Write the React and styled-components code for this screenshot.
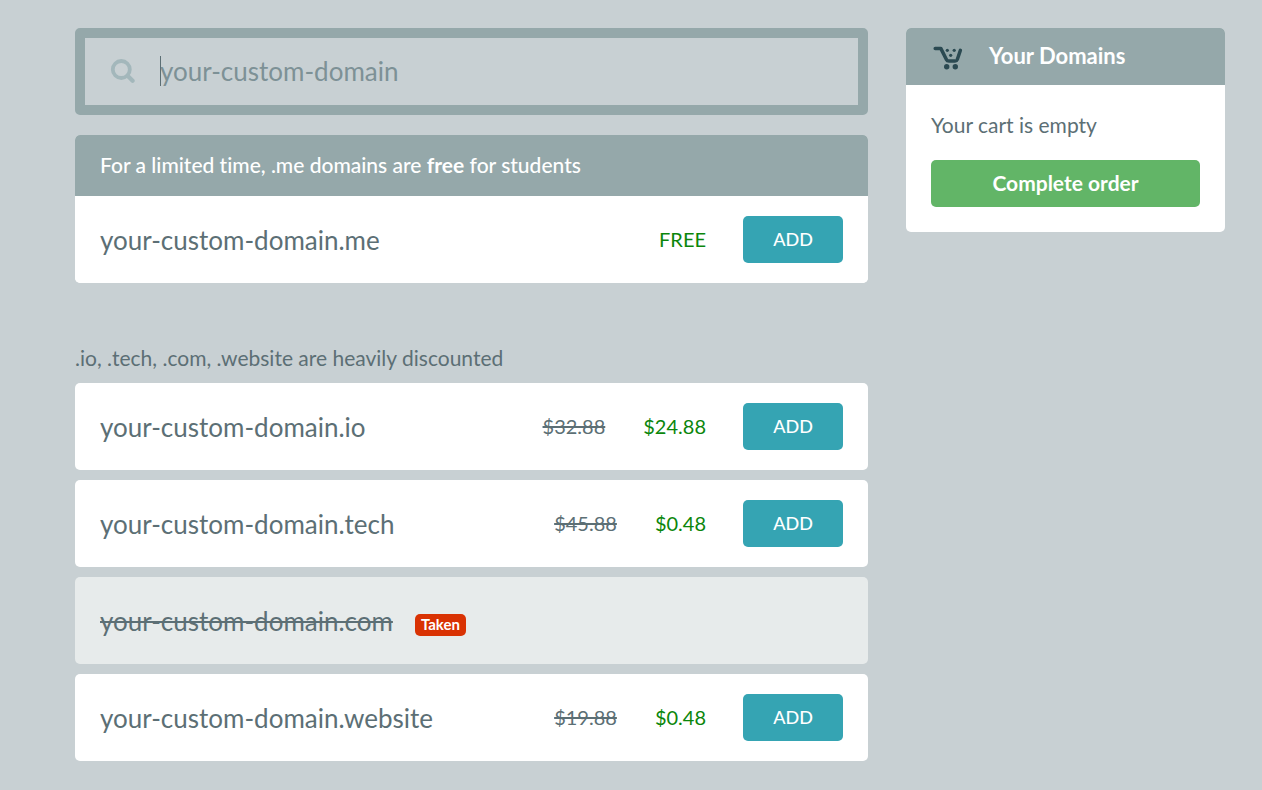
import React from "react";
import styled, { createGlobalStyle } from "styled-components";

const GlobalStyle = createGlobalStyle`
  *, *::before, *::after { box-sizing: border-box; }
  body {
    margin: 0;
    background: #c8d0d3;
    color: #5c6f75;
    font-family: Lato, "Liberation Sans", sans-serif;
    font-size: 21px;
    font-variant-ligatures: none;
    line-height: 30px;
  }
  button, input { font: inherit; }
`;

const Page = styled.div`
  display: grid;
  grid-template-columns: minmax(0, 1fr) 319px;
  align-items: start;
  gap: 38px;
  padding: 28px 37px 28px 75px;
`;

const Main = styled.main`
  display: flex;
  flex-direction: column;
`;

const SearchBox = styled.label`
  position: relative;
  display: flex;
  align-items: center;
  gap: 25px;
  padding: 18px 25px;
  border: 10px solid #95a8aa;
  border-radius: 5px;
`;

const SearchIcon = styled.svg`
  flex: none;
  width: 25px;
  height: 25px;
`;

const SearchInput = styled.input`
  flex: 1;
  min-width: 0;
  height: 31px;
  padding: 0 0 2px;
  border: 0;
  outline: 0;
  background: none;
  color: #5c6f75;
  caret-color: transparent;
  font-size: 26px;
  &::placeholder { color: #7d9196; opacity: 1; }
`;

const Caret = styled.span`
  position: absolute;
  left: 75px;
  top: 18px;
  width: 1px;
  height: 30px;
  background: #5c6f75;
`;

const Card = styled.section`
  overflow: hidden;
  margin-top: ${(p) => (p.$spaced ? "20px" : "0")};
  border-radius: 5px;
  background: #fff;
`;

const PromoTitle = styled.h2`
  margin: 0;
  padding: 15px 25px 16px;
  background: #95a8aa;
  color: #fff;
  font-size: 21px;
  font-weight: 500;
`;

const SectionNote = styled.p`
  margin: 60px 0 10px;
`;

const DomainList = styled.ul`
  display: flex;
  flex-direction: column;
  gap: 10px;
  margin: 0;
  padding: 0;
  list-style: none;
`;

const Row = styled.div`
  display: flex;
  align-items: center;
  min-height: 87px;
  padding: 20px 25px;
  border-radius: 5px;
  background: ${(p) => (p.$taken ? "#e7ebeb" : "#fff")};
`;

const DomainName = styled.span`
  font-size: 26px;
  text-decoration: ${(p) => (p.$taken ? "line-through 2px" : "none")};
`;

const TakenBadge = styled.span`
  margin: 8px 0 0 22px;
  padding: 0 6px 2px;
  border-radius: 5px;
  background: #d93203;
  color: #fff;
  font-size: 15px;
  font-weight: 700;
  line-height: 20px;
`;

const Prices = styled.div`
  display: flex;
  gap: 38px;
  margin: 0 37px 0 auto;
  padding-bottom: 2px;
  font-size: 20px;
`;

const OldPrice = styled.s`
  text-decoration-thickness: 2px;
`;

const Price = styled.span`
  color: #0b860b;
`;

const Button = styled.button`
  width: ${(p) => (p.$wide ? "100%" : "100px")};
  height: 47px;
  padding: 0 0 1px;
  border: 0;
  border-radius: 5px;
  background: ${(p) => (p.$wide ? "#62b567" : "#35a4b3")};
  color: #fff;
  font-size: ${(p) => (p.$wide ? "21px" : "18px")};
  font-weight: ${(p) => (p.$wide ? 700 : 500)};
  cursor: pointer;
`;

const CartHeader = styled.header`
  display: flex;
  align-items: center;
  gap: 26px;
  height: 57px;
  padding: 0 27px;
  background: #95a8aa;
`;

const CartTitle = styled.h2`
  margin: 0;
  padding-bottom: 2px;
  color: #fff;
  font-size: 22px;
  font-weight: 700;
`;

const CartBody = styled.div`
  padding: 25px;
`;

const CartText = styled.p`
  margin: 0 0 20px;
`;

const CartGlyph = () => (
  <svg width="30" height="26" viewBox="0 0 30 26" aria-hidden="true">
    <path
      d="M2.2 4.4H7.8L13.4 15.5Q14.1 17.1 16 17.1H22Q23.7 17.1 24.3 15.5L27.4 6.3"
      fill="none"
      stroke="#2b4a52"
      strokeWidth="3.5"
      strokeLinecap="round"
      strokeLinejoin="round"
    />
    <g fill="#2b4a52">
      <circle cx="14.3" cy="6.3" r="1.6" />
      <circle cx="21.2" cy="6.3" r="1.6" />
      <circle cx="17.7" cy="11.3" r="1.6" />
      <circle cx="13.7" cy="22.7" r="2.7" />
      <circle cx="22.3" cy="22.7" r="2.7" />
    </g>
  </svg>
);

const DOMAINS = [
  { name: "your-custom-domain.io", old: "$32.88", price: "$24.88" },
  { name: "your-custom-domain.tech", old: "$45.88", price: "$0.48" },
  { name: "your-custom-domain.com", taken: true },
  { name: "your-custom-domain.website", old: "$19.88", price: "$0.48" },
];

function Domain({ as, name, old, price, taken }) {
  return (
    <Row as={as} $taken={taken}>
      <DomainName $taken={taken}>{name}</DomainName>
      {taken ? (
        <TakenBadge>Taken</TakenBadge>
      ) : (
        <>
          <Prices>
            {old && <OldPrice>{old}</OldPrice>}
            <Price>{price}</Price>
          </Prices>
          <Button type="button">ADD</Button>
        </>
      )}
    </Row>
  );
}

export default function App() {
  return (
    <>
      <GlobalStyle />
      <Page>
        <Main>
          <SearchBox>
            <SearchIcon viewBox="0 0 25 25" aria-hidden="true">
              <g fill="none" stroke="#a3b7bb" strokeWidth="3.8" strokeLinecap="round">
                <circle cx="11.3" cy="10.5" r="8.5" />
                <path d="M17.6 16.8L22.6 21.8" strokeWidth="4.2" />
              </g>
            </SearchIcon>
            <SearchInput type="text" placeholder="your-custom-domain" aria-label="Domain name" />
            <Caret />
          </SearchBox>
          <Card $spaced>
            <PromoTitle>
              For a limited time, .me domains are <strong>free</strong> for students
            </PromoTitle>
            <Domain name="your-custom-domain.me" price="FREE" />
          </Card>
          <SectionNote>.io, .tech, .com, .website are heavily discounted</SectionNote>
          <DomainList>
            {DOMAINS.map((d) => (
              <Domain key={d.name} as="li" {...d} />
            ))}
          </DomainList>
        </Main>
        <Card as="aside">
          <CartHeader>
            <CartGlyph />
            <CartTitle>Your Domains</CartTitle>
          </CartHeader>
          <CartBody>
            <CartText>Your cart is empty</CartText>
            <Button type="button" $wide>Complete order</Button>
          </CartBody>
        </Card>
      </Page>
    </>
  );
}
